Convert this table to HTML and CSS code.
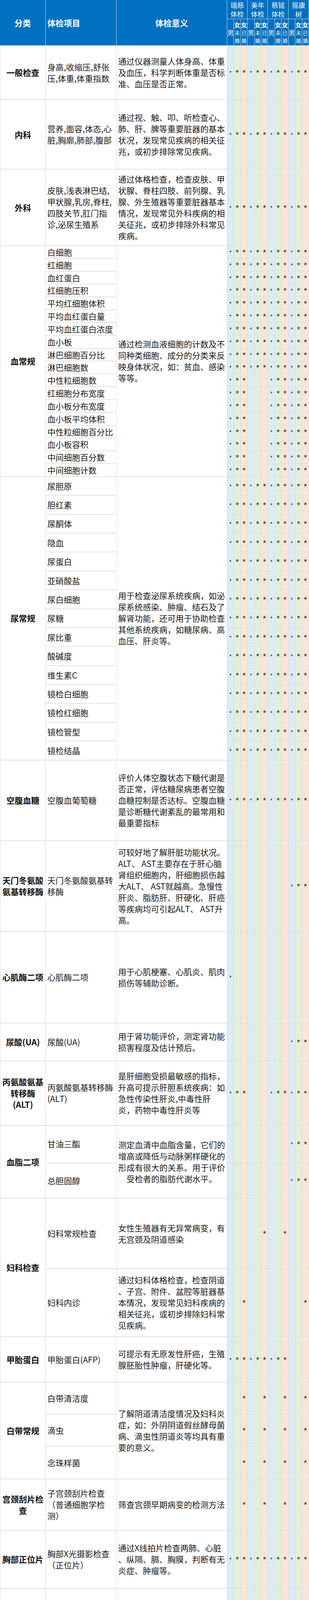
FILE: index.html
```html
<!DOCTYPE html>
<html lang="zh-CN">
<head>
<meta charset="utf-8">
<title>体检项目对比</title>
<link rel="stylesheet" href="styles.css">
</head>
<body>
<div class="sheet">
<div class="hc cat-h span2">分类</div>
<div class="hc item-h span2">体检项目</div>
<div class="hc mean-h span2">体检意义</div>
<div class="grp">瑞慈<br>体检</div>
<div class="grp">美年<br>体检</div>
<div class="grp">慈铭<br>体检</div>
<div class="grp">摇康<br>树</div>
<div class="sx">男</div><div class="sx"><span class="f">女</span><span class="s">未</span><span class="s">婚</span></div><div class="sx"><span class="f">女</span><span class="s">已</span><span class="s">婚</span></div>
<div class="sx">男</div><div class="sx"><span class="f">女</span><span class="s">未</span><span class="s">婚</span></div><div class="sx"><span class="f">女</span><span class="s">已</span><span class="s">婚</span></div>
<div class="sx">男</div><div class="sx"><span class="f">女</span><span class="s">未</span><span class="s">婚</span></div><div class="sx"><span class="f">女</span><span class="s">已</span><span class="s">婚</span></div>
<div class="sx">男</div><div class="sx"><span class="f">女</span><span class="s">未</span><span class="s">婚</span></div><div class="sx"><span class="f">女</span><span class="s">已</span><span class="s">婚</span></div>

<div class="cat">一般检查</div><div class="item">身高,收缩压,舒张<br>压,体重,体重指数</div><div class="mean">通过仪器测量人体身高、体重<br>及血压，科学判断体重是否标<br>准、血压是否正常。</div><div class="m">*</div><div class="u">*</div><div class="w">*</div><div class="m">*</div><div class="u">*</div><div class="w">*</div><div class="m">*</div><div class="u">*</div><div class="w">*</div><div class="m">*</div><div class="u">*</div><div class="w">*</div>
<div class="cat">内科</div><div class="item">营养,面容,体态,心<br>脏,胸廓,肺部,腹部</div><div class="mean">通过视、触、叩、听检查心、<br>肺、肝、脾等重要脏器的基本<br>状况，发现常见疾病的相关征<br>兆，或初步排除常见疾病。</div><div class="m">*</div><div class="u">*</div><div class="w">*</div><div class="m">*</div><div class="u">*</div><div class="w">*</div><div class="m">*</div><div class="u">*</div><div class="w">*</div><div class="m">*</div><div class="u">*</div><div class="w">*</div>
<div class="cat">外科</div><div class="item">皮肤,浅表淋巴结,<br>甲状腺,乳房,脊柱,<br>四肢关节,肛门指<br>诊,泌尿生殖系</div><div class="mean">通过体格检查，检查皮肤、甲<br>状腺、脊柱四肢、前列腺、乳<br>腺、外生殖器等重要脏器基本<br>情况，发现常见外科疾病的相<br>关征兆，或初步排除外科常见<br>疾病。</div><div class="m">*</div><div class="u">*</div><div class="w">*</div><div class="m">*</div><div class="u">*</div><div class="w">*</div><div class="m">*</div><div class="u">*</div><div class="w">*</div><div class="m">*</div><div class="u">*</div><div class="w">*</div>

<div class="cat span18">血常规</div><div class="item">白细胞</div><div class="mean span18">通过检测血液细胞的计数及不<br>同种类细胞、成分的分类来反<br>映身体状况，如：贫血、感染<br>等等。</div><div class="m">*</div><div class="u">*</div><div class="w">*</div><div class="m">*</div><div class="u">*</div><div class="w">*</div><div class="m">*</div><div class="u">*</div><div class="w">*</div><div class="m">*</div><div class="u">*</div><div class="w">*</div>
<div class="item">红细胞</div><div class="m">*</div><div class="u">*</div><div class="w">*</div><div class="m">*</div><div class="u">*</div><div class="w">*</div><div class="m">*</div><div class="u">*</div><div class="w">*</div><div class="m">*</div><div class="u">*</div><div class="w">*</div>
<div class="item">血红蛋白</div><div class="m">*</div><div class="u">*</div><div class="w">*</div><div class="m">*</div><div class="u">*</div><div class="w">*</div><div class="m">*</div><div class="u">*</div><div class="w">*</div><div class="m">*</div><div class="u">*</div><div class="w">*</div>
<div class="item">红细胞压积</div><div class="m">*</div><div class="u">*</div><div class="w">*</div><div class="m">*</div><div class="u">*</div><div class="w">*</div><div class="m">*</div><div class="u">*</div><div class="w">*</div><div class="m">*</div><div class="u">*</div><div class="w">*</div>
<div class="item">平均红细胞体积</div><div class="m">*</div><div class="u">*</div><div class="w">*</div><div class="m">*</div><div class="u">*</div><div class="w">*</div><div class="m">*</div><div class="u">*</div><div class="w">*</div><div class="m">*</div><div class="u">*</div><div class="w">*</div>
<div class="item">平均血红蛋白量</div><div class="m">*</div><div class="u">*</div><div class="w">*</div><div class="m">*</div><div class="u">*</div><div class="w">*</div><div class="m">*</div><div class="u">*</div><div class="w">*</div><div class="m">*</div><div class="u">*</div><div class="w">*</div>
<div class="item">平均血红蛋白浓度</div><div class="m">*</div><div class="u">*</div><div class="w">*</div><div class="m">*</div><div class="u">*</div><div class="w">*</div><div class="m">*</div><div class="u">*</div><div class="w">*</div><div class="m">*</div><div class="u">*</div><div class="w">*</div>
<div class="item">血小板</div><div class="m">*</div><div class="u">*</div><div class="w">*</div><div class="m">*</div><div class="u">*</div><div class="w">*</div><div class="m">*</div><div class="u">*</div><div class="w">*</div><div class="m">*</div><div class="u">*</div><div class="w">*</div>
<div class="item">淋巴细胞百分比</div><div class="m">*</div><div class="u">*</div><div class="w">*</div><div class="m">*</div><div class="u">*</div><div class="w">*</div><div class="m">*</div><div class="u">*</div><div class="w">*</div><div class="m">*</div><div class="u">*</div><div class="w">*</div>
<div class="item">淋巴细胞数</div><div class="m">*</div><div class="u">*</div><div class="w">*</div><div class="m">*</div><div class="u">*</div><div class="w">*</div><div class="m">*</div><div class="u">*</div><div class="w">*</div><div class="m">*</div><div class="u">*</div><div class="w">*</div>
<div class="item">中性粒细胞数</div><div class="m">*</div><div class="u">*</div><div class="w">*</div><div class="m"></div><div class="u"></div><div class="w"></div><div class="m">*</div><div class="u">*</div><div class="w">*</div><div class="m">*</div><div class="u">*</div><div class="w">*</div>
<div class="item">红细胞分布宽度</div><div class="m">*</div><div class="u">*</div><div class="w">*</div><div class="m"></div><div class="u"></div><div class="w"></div><div class="m">*</div><div class="u">*</div><div class="w">*</div><div class="m">*</div><div class="u">*</div><div class="w">*</div>
<div class="item">血小板分布宽度</div><div class="m">*</div><div class="u">*</div><div class="w">*</div><div class="m"></div><div class="u"></div><div class="w"></div><div class="m">*</div><div class="u">*</div><div class="w">*</div><div class="m">*</div><div class="u">*</div><div class="w">*</div>
<div class="item">血小板平均体积</div><div class="m">*</div><div class="u">*</div><div class="w">*</div><div class="m"></div><div class="u"></div><div class="w"></div><div class="m">*</div><div class="u">*</div><div class="w">*</div><div class="m">*</div><div class="u">*</div><div class="w">*</div>
<div class="item">中性粒细胞百分比</div><div class="m">*</div><div class="u">*</div><div class="w">*</div><div class="m"></div><div class="u"></div><div class="w"></div><div class="m">*</div><div class="u">*</div><div class="w">*</div><div class="m">*</div><div class="u">*</div><div class="w">*</div>
<div class="item">血小板容积</div><div class="m">*</div><div class="u">*</div><div class="w">*</div><div class="m"></div><div class="u"></div><div class="w"></div><div class="m">*</div><div class="u">*</div><div class="w">*</div><div class="m">*</div><div class="u">*</div><div class="w">*</div>
<div class="item">中间细胞百分数</div><div class="m">*</div><div class="u">*</div><div class="w">*</div><div class="m"></div><div class="u"></div><div class="w"></div><div class="m">*</div><div class="u">*</div><div class="w">*</div><div class="m">*</div><div class="u">*</div><div class="w">*</div>
<div class="item">中间细胞计数</div><div class="m">*</div><div class="u">*</div><div class="w">*</div><div class="m"></div><div class="u"></div><div class="w"></div><div class="m">*</div><div class="u">*</div><div class="w">*</div><div class="m">*</div><div class="u">*</div><div class="w">*</div>

<div class="cat span15">尿常规</div><div class="item">尿胆原</div><div class="mean span15">用于检查泌尿系统疾病，如泌<br>尿系统感染、肿瘤、结石及了<br>解肾功能，还可用于协助检查<br>其他系统疾病，如糖尿病、高<br>血压、肝炎等。</div><div class="m">*</div><div class="u">*</div><div class="w">*</div><div class="m">*</div><div class="u">*</div><div class="w">*</div><div class="m">*</div><div class="u">*</div><div class="w">*</div><div class="m">*</div><div class="u">*</div><div class="w">*</div>
<div class="item">胆红素</div><div class="m">*</div><div class="u">*</div><div class="w">*</div><div class="m">*</div><div class="u">*</div><div class="w">*</div><div class="m">*</div><div class="u">*</div><div class="w">*</div><div class="m">*</div><div class="u">*</div><div class="w">*</div>
<div class="item">尿酮体</div><div class="m">*</div><div class="u">*</div><div class="w">*</div><div class="m">*</div><div class="u">*</div><div class="w">*</div><div class="m">*</div><div class="u">*</div><div class="w">*</div><div class="m">*</div><div class="u">*</div><div class="w">*</div>
<div class="item">隐血</div><div class="m">*</div><div class="u">*</div><div class="w">*</div><div class="m">*</div><div class="u">*</div><div class="w">*</div><div class="m">*</div><div class="u">*</div><div class="w">*</div><div class="m">*</div><div class="u">*</div><div class="w">*</div>
<div class="item">尿蛋白</div><div class="m">*</div><div class="u">*</div><div class="w">*</div><div class="m">*</div><div class="u">*</div><div class="w">*</div><div class="m">*</div><div class="u">*</div><div class="w">*</div><div class="m">*</div><div class="u">*</div><div class="w">*</div>
<div class="item">亚硝酸盐</div><div class="m">*</div><div class="u">*</div><div class="w">*</div><div class="m">*</div><div class="u">*</div><div class="w">*</div><div class="m">*</div><div class="u">*</div><div class="w">*</div><div class="m">*</div><div class="u">*</div><div class="w">*</div>
<div class="item">尿白细胞</div><div class="m">*</div><div class="u">*</div><div class="w">*</div><div class="m">*</div><div class="u">*</div><div class="w">*</div><div class="m">*</div><div class="u">*</div><div class="w">*</div><div class="m">*</div><div class="u">*</div><div class="w">*</div>
<div class="item">尿糖</div><div class="m">*</div><div class="u">*</div><div class="w">*</div><div class="m">*</div><div class="u">*</div><div class="w">*</div><div class="m">*</div><div class="u">*</div><div class="w">*</div><div class="m">*</div><div class="u">*</div><div class="w">*</div>
<div class="item">尿比重</div><div class="m">*</div><div class="u">*</div><div class="w">*</div><div class="m">*</div><div class="u">*</div><div class="w">*</div><div class="m">*</div><div class="u">*</div><div class="w">*</div><div class="m">*</div><div class="u">*</div><div class="w">*</div>
<div class="item">酸碱度</div><div class="m">*</div><div class="u">*</div><div class="w">*</div><div class="m">*</div><div class="u">*</div><div class="w">*</div><div class="m">*</div><div class="u">*</div><div class="w">*</div><div class="m">*</div><div class="u">*</div><div class="w">*</div>
<div class="item">维生素C</div><div class="m">*</div><div class="u">*</div><div class="w">*</div><div class="m">*</div><div class="u">*</div><div class="w">*</div><div class="m">*</div><div class="u">*</div><div class="w">*</div><div class="m">*</div><div class="u">*</div><div class="w">*</div>
<div class="item">镜检白细胞</div><div class="m">*</div><div class="u">*</div><div class="w">*</div><div class="m">*</div><div class="u">*</div><div class="w">*</div><div class="m">*</div><div class="u">*</div><div class="w">*</div><div class="m">*</div><div class="u">*</div><div class="w">*</div>
<div class="item">镜检红细胞</div><div class="m">*</div><div class="u">*</div><div class="w">*</div><div class="m">*</div><div class="u">*</div><div class="w">*</div><div class="m">*</div><div class="u">*</div><div class="w">*</div><div class="m">*</div><div class="u">*</div><div class="w">*</div>
<div class="item">镜检管型</div><div class="m">*</div><div class="u">*</div><div class="w">*</div><div class="m">*</div><div class="u">*</div><div class="w">*</div><div class="m">*</div><div class="u">*</div><div class="w">*</div><div class="m">*</div><div class="u">*</div><div class="w">*</div>
<div class="item">镜检结晶</div><div class="m">*</div><div class="u">*</div><div class="w">*</div><div class="m">*</div><div class="u">*</div><div class="w">*</div><div class="m">*</div><div class="u">*</div><div class="w">*</div><div class="m">*</div><div class="u">*</div><div class="w">*</div>

<div class="cat">空腹血糖</div><div class="item">空腹血葡萄糖</div><div class="mean">评价人体空腹状态下糖代谢是<br>否正常，评估糖尿病患者空腹<br>血糖控制是否达标。空腹血糖<br>是诊断糖代谢紊乱的最常用和<br>最重要指标</div><div class="m">*</div><div class="u">*</div><div class="w">*</div><div class="m">*</div><div class="u">*</div><div class="w">*</div><div class="m">*</div><div class="u">*</div><div class="w">*</div><div class="m">*</div><div class="u">*</div><div class="w">*</div>
<div class="cat">天门冬氨酸<br>氨基转移酶</div><div class="item">天门冬氨酸氨基转<br>移酶</div><div class="mean">可较好地了解肝脏功能状况。<br>ALT、 AST主要存在于肝心脑<br>肾组织细胞内，肝细胞损伤越<br>大ALT、 AST就越高。急慢性<br>肝炎、脂肪肝、肝硬化、肝癌<br>等疾病均可引起ALT、 AST升<br>高。</div><div class="m"></div><div class="u"></div><div class="w"></div><div class="m"></div><div class="u"></div><div class="w"></div><div class="m"></div><div class="u"></div><div class="w"></div><div class="m">*</div><div class="u">*</div><div class="w">*</div>
<div class="cat">心肌酶二项</div><div class="item">心肌酶二项</div><div class="mean">用于心肌梗塞、心肌炎、肌肉<br>损伤等辅助诊断。</div><div class="m">*</div><div class="u"></div><div class="w"></div><div class="m"></div><div class="u"></div><div class="w"></div><div class="m"></div><div class="u"></div><div class="w"></div><div class="m"></div><div class="u"></div><div class="w"></div>
<div class="cat">尿酸(UA)</div><div class="item">尿酸(UA)</div><div class="mean">用于肾功能评价，测定肾功能<br>损害程度及估计预后。</div><div class="m"></div><div class="u"></div><div class="w"></div><div class="m"></div><div class="u"></div><div class="w"></div><div class="m"></div><div class="u"></div><div class="w"></div><div class="m">*</div><div class="u">*</div><div class="w">*</div>
<div class="cat">丙氨酸氨基<br>转移酶<br>(ALT)</div><div class="item">丙氨酸氨基转移酶<br>(ALT)</div><div class="mean">是肝细胞受损最敏感的指标，<br>升高可提示肝胆系统疾病：如<br>急性传染性肝炎,中毒性肝<br>炎，药物中毒性肝炎等</div><div class="m">*</div><div class="u">*</div><div class="w">*</div><div class="m"></div><div class="u"></div><div class="w"></div><div class="m">*</div><div class="u">*</div><div class="w">*</div><div class="m">*</div><div class="u">*</div><div class="w">*</div>

<div class="cat span2">血脂二项</div><div class="item">甘油三酯</div><div class="mean center span2">测定血清中血脂含量，它们的<br>增高或降低与动脉粥样硬化的<br>形成有很大的关系。用于评价<br>受检者的脂肪代谢水平。</div><div class="m"></div><div class="u"></div><div class="w"></div><div class="m"></div><div class="u"></div><div class="w"></div><div class="m"></div><div class="u"></div><div class="w"></div><div class="m">*</div><div class="u">*</div><div class="w">*</div>
<div class="item">总胆固醇</div><div class="m"></div><div class="u"></div><div class="w"></div><div class="m"></div><div class="u"></div><div class="w"></div><div class="m"></div><div class="u"></div><div class="w"></div><div class="m">*</div><div class="u">*</div><div class="w">*</div>

<div class="cat span2">妇科检查</div><div class="item">妇科常规检查</div><div class="mean">女性生殖器有无异常病变，有<br>无宫颈及阴道感染</div><div class="m"></div><div class="u"></div><div class="w"></div><div class="m"></div><div class="u"></div><div class="w">*</div><div class="m"></div><div class="u"></div><div class="w">*</div><div class="m"></div><div class="u"></div><div class="w"></div>
<div class="item">妇科内诊</div><div class="mean">通过妇科体格检查，检查阴道<br>、子宫、附件、盆腔等脏器基<br>本情况，发现常见妇科疾病的<br>相关征兆，或初步排除妇科常<br>见疾病。</div><div class="m"></div><div class="u"></div><div class="w">*</div><div class="m"></div><div class="u"></div><div class="w"></div><div class="m"></div><div class="u"></div><div class="w"></div><div class="m"></div><div class="u"></div><div class="w">*</div>

<div class="cat">甲胎蛋白</div><div class="item">甲胎蛋白(AFP)</div><div class="mean">可提示有无原发性肝癌，生殖<br>腺胚胎性肿瘤，肝硬化等。</div><div class="m">*</div><div class="u">*</div><div class="w">*</div><div class="m">*</div><div class="u">*</div><div class="w">*</div><div class="m">*</div><div class="u">*</div><div class="w">*</div><div class="m"></div><div class="u"></div><div class="w"></div>

<div class="cat span3">白带常规</div><div class="item">白带清洁度</div><div class="mean span3">了解阴道清洁度情况及妇科炎<br>症，如：外阴阴道假丝酵母菌<br>病、滴虫性阴道炎等均具有重<br>要的意义。</div><div class="m"></div><div class="u"></div><div class="w">*</div><div class="m"></div><div class="u"></div><div class="w">*</div><div class="m"></div><div class="u"></div><div class="w">*</div><div class="m"></div><div class="u"></div><div class="w">*</div>
<div class="item">滴虫</div><div class="m"></div><div class="u"></div><div class="w">*</div><div class="m"></div><div class="u"></div><div class="w">*</div><div class="m"></div><div class="u"></div><div class="w">*</div><div class="m"></div><div class="u"></div><div class="w">*</div>
<div class="item">念珠样菌</div><div class="m"></div><div class="u"></div><div class="w">*</div><div class="m"></div><div class="u"></div><div class="w">*</div><div class="m"></div><div class="u"></div><div class="w">*</div><div class="m"></div><div class="u"></div><div class="w">*</div>

<div class="cat">宫颈刮片检<br>查</div><div class="item">子宫颈刮片检查<br>（普通细胞学检<br>测）</div><div class="mean">筛查宫颈早期病变的检测方法</div><div class="m"></div><div class="u"></div><div class="w">*</div><div class="m"></div><div class="u"></div><div class="w">*</div><div class="m"></div><div class="u"></div><div class="w">*</div><div class="m"></div><div class="u"></div><div class="w">*</div>
<div class="cat">胸部正位片</div><div class="item">胸部X光摄影检查<br>（正位片）</div><div class="mean">通过X线拍片检查两肺、心脏<br>、纵隔、膈、胸膜，判断有无<br>炎症、肿瘤等。</div><div class="m">*</div><div class="u">*</div><div class="w">*</div><div class="m">*</div><div class="u">*</div><div class="w">*</div><div class="m">*</div><div class="u">*</div><div class="w">*</div><div class="m">*</div><div class="u">*</div><div class="w">*</div>

<div class="cat span5">腹部彩超</div><div class="item">胆</div><div class="mean center span5">对人体腹部内脏器官（肝、胆<br>、脾、胰、双肾）的状况和各<br>种病变（如肿瘤、结石、积水<br>、脂肪肝等）提供高清晰度的<br>彩色动态超声断层图像判断，<br>依病灶周围血管情况、病灶内<br>血流血供情况-良恶性病变鉴<br>别；判断肾动脉狭窄等。</div><div class="m">*</div><div class="u">*</div><div class="w">*</div><div class="m">*</div><div class="u">*</div><div class="w">*</div><div class="m">*</div><div class="u">*</div><div class="w">*</div><div class="m">*</div><div class="u">*</div><div class="w">*</div>
<div class="item">肝</div><div class="m">*</div><div class="u">*</div><div class="w">*</div><div class="m">*</div><div class="u">*</div><div class="w">*</div><div class="m">*</div><div class="u">*</div><div class="w">*</div><div class="m">*</div><div class="u">*</div><div class="w">*</div>
<div class="item">脾</div><div class="m">*</div><div class="u">*</div><div class="w">*</div><div class="m">*</div><div class="u">*</div><div class="w">*</div><div class="m">*</div><div class="u">*</div><div class="w">*</div><div class="m">*</div><div class="u">*</div><div class="w">*</div>
<div class="item">双肾</div><div class="m">*</div><div class="u">*</div><div class="w">*</div><div class="m">*</div><div class="u">*</div><div class="w">*</div><div class="m">*</div><div class="u">*</div><div class="w">*</div><div class="m">*</div><div class="u">*</div><div class="w">*</div>
<div class="item">胰彩超</div><div class="m">*</div><div class="u">*</div><div class="w">*</div><div class="m">*</div><div class="u">*</div><div class="w">*</div><div class="m">*</div><div class="u">*</div><div class="w">*</div><div class="m">*</div><div class="u">*</div><div class="w">*</div>

<div class="cat">心电图</div><div class="item">心电图</div><div class="mean">通过体表特定部位同步记录和<br>分析心脏每一个心动周期所产<br>生电活动变化的曲线图形，为<br>心脏疾病诊断、疗效评价、预<br>后评估提供重要的依据。</div><div class="m">*</div><div class="u">*</div><div class="w">*</div><div class="m">*</div><div class="u">*</div><div class="w">*</div><div class="m">*</div><div class="u">*</div><div class="w">*</div><div class="m">*</div><div class="u">*</div><div class="w">*</div>
<div class="cat">增值服务</div><div class="item">营养早餐</div><div class="mean">面包、牛奶、鸡蛋等</div><div class="m">*</div><div class="u">*</div><div class="w">*</div><div class="m">*</div><div class="u">*</div><div class="w">*</div><div class="m">*</div><div class="u">*</div><div class="w">*</div><div class="m">*</div><div class="u">*</div><div class="w">*</div>
<div class="cat">个检报告</div><div class="item">电子或纸质报告</div><div class="mean">电子或纸质报告（快递费到<br>付）</div><div class="m">*</div><div class="u">*</div><div class="w">*</div><div class="m">*</div><div class="u">*</div><div class="w">*</div><div class="m">*</div><div class="u">*</div><div class="w">*</div><div class="m">*</div><div class="u">*</div><div class="w">*</div>
</div>
</body>
</html>
```

FILE: styles.css
```css
* { box-sizing: border-box; }

html, body {
  margin: 0;
  padding: 0;
  background: #ffffff;
}

body {
  font-family: "Noto Sans CJK SC", "Noto Sans", sans-serif;
  color: #1a1a1a;
}

.sheet {
  display: grid;
  width: 790px;
  grid-template-columns: 117px 181px 283px repeat(12, 1fr);
  grid-template-rows:
    49px 68px
    139px 178px 196px
    repeat(18, 32.8333px)
    repeat(15, 48.4px)
    206px 233px 234px 97px 165px
    96px 91px
    180px 174px
    117px
    82px 82px 83px
    132px 148px
    repeat(5, 86.6px)
    165px 76px 82px;
}

.sheet > div {
  display: flex;
  align-items: center;
  min-width: 0;
  border-right: 1px solid #d9d9d9;
  border-bottom: 2px solid #e3e3e3;
  white-space: nowrap;
  font-size: 21px;
  line-height: 29px;
}

.span2 { grid-row: span 2; }
.span3 { grid-row: span 3; }
.span5 { grid-row: span 5; }
.span15 { grid-row: span 15; }
.span18 { grid-row: span 18; }

/* header */
.sheet > .hc,
.sheet > .grp,
.sheet > .sx {
  background: #0070c0;
  color: #ffffff;
  border-right-color: #c9d5e4;
  border-bottom: 1px solid #c9d5e4;
}

.hc { font-weight: bold; }
.cat-h, .mean-h { justify-content: center; }
.item-h { padding-left: 4px; }

.sheet > .grp {
  grid-column: span 3;
  justify-content: center;
  text-align: center;
  font-size: 17px;
  line-height: 23px;
}

.sheet > .sx {
  flex-direction: column;
  justify-content: center;
  font-size: 16px;
  line-height: 20px;
}

.sx .f {
  display: block;
  font-weight: bold;
  font-size: 16px;
  line-height: 22px;
}

.sx .s {
  display: block;
  font-size: 13px;
  line-height: 20px;
}

/* body */
.sheet > .cat {
  justify-content: center;
  text-align: center;
  font-weight: bold;
  color: #111111;
  border-left: 1px solid #d9d9d9;
}

.item, .mean { padding-left: 4px; }

.sheet > .mean.center {
  justify-content: center;
  text-align: center;
  padding-left: 0;
}

.sheet > .m,
.sheet > .u,
.sheet > .w {
  justify-content: center;
  font-family: "Liberation Sans", "DejaVu Sans", sans-serif;
  font-size: 21px;
}

.sheet > .m { background: #ddebf7; font-size: 15px; }
.sheet > .u { background: #e2efda; }
.sheet > .w { background: #fce4d6; }
```
